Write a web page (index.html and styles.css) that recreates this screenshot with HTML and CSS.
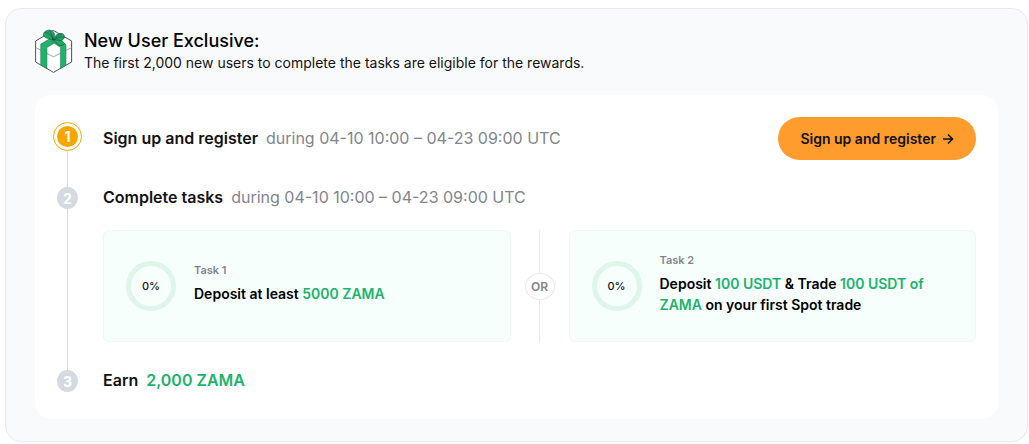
FILE: index.html
```html
<!DOCTYPE html>
<html lang="en">
<head>
  <meta charset="UTF-8" />
  <meta name="viewport" content="width=device-width, initial-scale=1.0" />
  <title>New User Exclusive</title>
  <link rel="stylesheet" href="styles.css">
</head>
<body>

  <section class="panel">
    <header class="panel-header">
      <!-- Gift box -->
      <svg class="gift" viewBox="0 0 38 44" aria-hidden="true">
        <g stroke-linejoin="round">
          <path fill="#fff" stroke="#3b3a52" stroke-width="0.9" d="M.6 12 18.500 1.500 36.600 12v21L18.500 43.400.6 33z"/>
          <path fill="none" stroke="#8d8f9c" stroke-width="0.8" d="M.6 18.500 18.500 27.800l18.100-9.300"/>
          <path fill="#20b26c" stroke="#20704a" stroke-width="0.5" d="M5.700 15 17 8.500l5 4L12 18.500v21.200L5.700 36z"/>
          <path fill="#20b26c" stroke="#20704a" stroke-width="0.5" d="M31 15.500 20 9l-3.500 3.500 8.900 5.800v21.200l5.600-3.200z"/>
        </g>
        <g fill="#20a866" stroke="#17573c" stroke-width="0.7" stroke-linejoin="round">
          <path d="M18 11c-4-1.500-9.500-2-9.500-5.200C8.500 2 13 .6 16 1.400c3.800 1 4.200 4.600 2 9.600z"/>
          <path d="M19 11c-.5-3.500 3-6 6-6.500 3.500-.4 5 2 4.200 4.500C28 12 23 12.500 19 11z"/>
          <path d="M18.500 11c5-.5 9.500.5 11 3.500-1 2-4 2.500-6 1.500-1.500-1-3.500-3-5-5z"/>
          <path fill="none" d="M10 3.500c4 .5 7 3.500 8 7.500M14 1.500c2 2 3.500 5 4 9M27 5c-3.500 1-6.500 3.500-8 6M29 8c-4-.5-7 1-10 3"/>
        </g>
      </svg>
      <div>
        <h1 class="panel-title">New User Exclusive:</h1>
        <p class="panel-text">The first 2,000 new users to complete the tasks are eligible for the rewards.</p>
      </div>
    </header>

    <ol class="steps">
      <li class="step">
        <div class="step-track step-track-active">
          <span class="marker marker-active"><span class="marker-dot">1</span></span>
          <span class="line"></span>
        </div>
        <div class="step-body step-first">
          <div class="step-head">
            <h2 class="step-title">Sign up and register</h2>
            <span class="step-time">during 04-10 10:00 – 04-23 09:00 UTC</span>
            <button class="btn" type="button">
              Sign up and register
              <svg class="arrow" viewBox="0 0 12 12" aria-hidden="true">
                <path d="M1 6h9.500M6 1.500 10.500 6 6 10.500"/>
              </svg>
            </button>
          </div>
        </div>
      </li>

      <li class="step">
        <div class="step-track">
          <span class="marker">2</span>
          <span class="line"></span>
        </div>
        <div class="step-body step-tasks">
          <div class="step-head">
            <h2 class="step-title">Complete tasks</h2>
            <span class="step-time">during 04-10 10:00 – 04-23 09:00 UTC</span>
          </div>
          <div class="tasks">
            <div class="task">
              <div class="ring">0%</div>
              <div class="task-info">
                <p class="task-label">Task 1</p>
                <p class="task-title">Deposit at least <span class="green">5000 ZAMA</span></p>
              </div>
            </div>
            <div class="or">
              <span class="line"></span>
              <span class="or-badge">OR</span>
              <span class="line"></span>
            </div>
            <div class="task">
              <div class="ring">0%</div>
              <div class="task-info">
                <p class="task-label">Task 2</p>
                <p class="task-title">Deposit <span class="green">100 USDT</span> &amp; Trade <span class="green">100 USDT of ZAMA</span> on your first Spot trade</p>
              </div>
            </div>
          </div>
        </div>
      </li>

      <li class="step">
        <div class="step-track">
          <span class="marker">3</span>
        </div>
        <div class="step-body">
          <div class="step-head">
            <h2 class="step-title">Earn</h2>
            <span class="step-title green">2,000 ZAMA</span>
          </div>
        </div>
      </li>
    </ol>
  </section>

</body>
</html>
```
FILE: styles.css
```css
* {
  box-sizing: border-box;
}

body {
  margin: 8px 1px 2px 5px;
  background: #fff;
  color: #121214;
  font-family: Inter, 'Liberation Sans', sans-serif;
}

h1, h2, p, ol {
  margin: 0;
  padding: 0;
}

.panel {
  padding: 20px 29px 22px;
  background: #f9fafc;
  border: 1px solid #e7e9ef;
  border-radius: 16px;
}

.panel-header {
  display: flex;
  align-items: center;
  gap: 11px;
  margin-bottom: 22px;
}

.gift {
  width: 38px;
  height: 44px;
}

.panel-title {
  font-size: 18px;
  font-weight: 500;
  line-height: 24px;
  color: #000;
}

.panel-text {
  font-size: 14px;
  line-height: 20px;
}

/* Steps */
.steps {
  padding: 22px 22px 27px 18px;
  background: #fff;
  border-radius: 16px;
  list-style: none;
}

.step {
  display: flex;
  gap: 21px;
}

.step-track {
  display: flex;
  flex-direction: column;
  align-items: center;
  width: 29px;
}

.step-track-active {
  padding-top: 5px;
}

.marker, .marker-dot {
  display: flex;
  justify-content: center;
  align-items: center;
  width: 21px;
  height: 22px;
  border-radius: 50%;
  background: #d5dae0;
  color: #fff;
  font-size: 14px;
  font-weight: 700;
}

.marker-active {
  width: 29px;
  height: 29px;
  border: 1px solid #f7a600;
  background: #fff;
}

.marker-dot {
  height: 21px;
  background: #f7a600;
}

.line {
  flex: 1;
  width: 1px;
  background: #d5dae0;
}

.step-body {
  flex: 1;
  min-width: 0;
}

.step-first {
  padding-bottom: 27px;
}

.step-tasks {
  padding-bottom: 28px;
}

.step-head {
  display: flex;
  align-items: center;
  gap: 8px;
  line-height: 21px;
}

.step-title {
  font-size: 16px;
  font-weight: 600;
}

.step-time {
  color: #81858c;
  font-size: 16px;
}

.green {
  color: #20b26c;
}

.btn {
  display: flex;
  align-items: center;
  gap: 6px;
  height: 43px;
  margin-left: auto;
  padding: 0 22px;
  border: none;
  border-radius: 22px;
  background: #ff9c2e;
  color: #121214;
  font-family: inherit;
  font-size: 14px;
  font-weight: 600;
  cursor: pointer;
}

.arrow {
  width: 12px;
  height: 12px;
  fill: none;
  stroke: #121214;
  stroke-width: 1.6;
}

/* Tasks */
.tasks {
  display: flex;
  margin-top: 22px;
}

.task {
  display: flex;
  flex: 1;
  align-items: center;
  gap: 18px;
  min-height: 112px;
  padding: 16px 22px;
  border: 1px solid #eef8f4;
  border-radius: 6px;
  background: #f6fffc;
}

.ring {
  display: flex;
  flex-shrink: 0;
  justify-content: center;
  align-items: center;
  width: 50px;
  height: 50px;
  border: 5px solid #ddf6e9;
  border-radius: 50%;
  font-size: 11px;
  font-weight: 500;
}

.task-info {
  padding-bottom: 6px;
}

.task-label {
  margin-bottom: 5px;
  color: #81858c;
  font-size: 11px;
  font-weight: 600;
  line-height: 16px;
}

.task-title {
  color: #000;
  font-size: 14px;
  font-weight: 600;
  line-height: 21px;
}

.or {
  display: flex;
  flex-direction: column;
  align-items: center;
  width: 58px;
}

.or .line {
  background: #e7e9ef;
}

.or-badge {
  display: flex;
  justify-content: center;
  align-items: center;
  width: 30px;
  height: 27px;
  border: 1px solid #e7e9ef;
  border-radius: 50%;
  color: #81858c;
  font-size: 12px;
  font-weight: 600;
}
```
